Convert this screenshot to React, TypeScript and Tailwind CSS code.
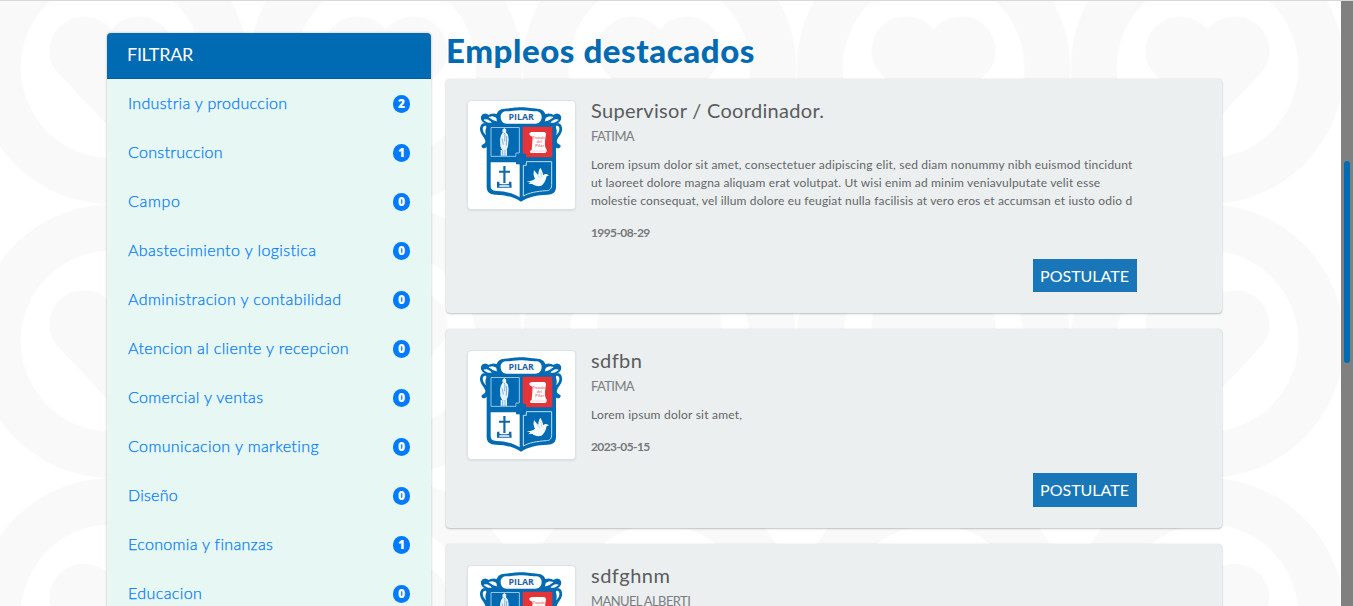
interface Category {
  name: string;
  count: number;
  tracking: string;
}

interface Job {
  title: string;
  titleTracking: string;
  place: string;
  lines: { text: string; tracking: string }[];
  date: string;
  height: string;
  button: string;
}

const categories: Category[] = [
  { name: "Industria y produccion", count: 2, tracking: "tracking-[0.32px]" },
  { name: "Construccion", count: 1, tracking: "tracking-[0.3px]" },
  { name: "Campo", count: 0, tracking: "tracking-[0.7px]" },
  { name: "Abastecimiento y logistica", count: 0, tracking: "tracking-[0.41px]" },
  { name: "Administracion y contabilidad", count: 0, tracking: "tracking-[0.42px]" },
  { name: "Atencion al cliente y recepcion", count: 0, tracking: "tracking-[0.36px]" },
  { name: "Comercial y ventas", count: 0, tracking: "tracking-[0.36px]" },
  { name: "Comunicacion y marketing", count: 0, tracking: "tracking-[0.4px]" },
  { name: "Diseño", count: 0, tracking: "tracking-[0.25px]" },
  { name: "Economia y finanzas", count: 1, tracking: "tracking-[0.33px]" },
  { name: "Educacion", count: 0, tracking: "tracking-[0.4px]" },
];

const jobs: Job[] = [
  {
    title: "Supervisor / Coordinador.",
    titleTracking: "tracking-[0.3px]",
    place: "FATIMA",
    lines: [
      {
        text: "Lorem ipsum dolor sit amet, consectetuer adipiscing elit, sed diam nonummy nibh euismod tincidunt",
        tracking: "tracking-[0.194px]",
      },
      {
        text: "ut laoreet dolore magna aliquam erat volutpat. Ut wisi enim ad minim veniavulputate velit esse",
        tracking: "tracking-[0.172px]",
      },
      {
        text: "molestie consequat, vel illum dolore eu feugiat nulla facilisis at vero eros et accumsan et iusto odio d",
        tracking: "tracking-[0.168px]",
      },
    ],
    date: "1995-08-29",
    height: "h-[234px]",
    button: "h-[33px] leading-[32px]",
  },
  {
    title: "sdfbn",
    titleTracking: "tracking-[0.4px]",
    place: "FATIMA",
    lines: [{ text: "Lorem ipsum dolor sit amet,", tracking: "tracking-[0.22px]" }],
    date: "2023-05-15",
    height: "h-[199px]",
    button: "h-[34px] leading-[32px]",
  },
  {
    title: "sdfghnm",
    titleTracking: "tracking-[0.5px]",
    place: "MANUEL ALBERTI",
    lines: [],
    date: "2023-05-15",
    height: "h-[199px]",
    button: "h-[34px] leading-[32px]",
  },
];

function HeartPattern() {
  return (
    <svg className="absolute inset-0 h-full w-full" aria-hidden="true">
      <defs>
        <pattern id="hearts" x="-25.5" y="-69.3" width="274" height="273.7" patternUnits="userSpaceOnUse">
          <circle cx="137" cy="136.8" r="113.7" fill="none" stroke="#f9f9f9" strokeWidth="46" />
          <path
            d="M137 98.800C129 89 119 85.800 108.500 85.800C90 85.800 75 101.300 75 120.300C75 129 78 136 83.500 142L137 199L190.500 142C196 136 199 129 199 120.300C199 101.300 184 85.800 165.500 85.800C155 85.800 145 89 137 98.800Z"
            fill="#f9f9f9"
          />
        </pattern>
      </defs>
      <rect width="100%" height="100%" fill="url(#hearts)" />
    </svg>
  );
}

function Ribbon() {
  return (
    <g strokeLinecap="round" strokeLinejoin="round">
      <path
        d="M120 96L84 96C70 92 63 84 65 74C68 65 78 65 86 71C96 64 108 66 118 71Z"
        fill="#006ab3"
        stroke="#006ab3"
        strokeWidth="4"
      />
      <path d="M89 76C98 72 107 76 117 86C108 88 98 84 89 76Z" fill="#fff" stroke="#fff" strokeWidth="3" />
      <path d="M73 84C79 80 86 84 94 91C85 93 78 90 73 84Z" fill="#fff" stroke="#fff" strokeWidth="2" />
      <path
        d="M76 94C66 91 60 100 60 112C61 127 72 134 76 146C77 153 73 154 66 159C62 163 67 170 74 169C85 165 87 154 84 145L84 104C84 98 81 95 76 94Z"
        fill="#006ab3"
      />
      <path d="M75 101C69 101 67 108 69 116C71 122 75 126 78 130C75 120 76 112 80 105C79 102 78 101 75 101Z" fill="#fff" />
    </g>
  );
}

function PilarShield() {
  return (
    <svg viewBox="24 27 321 324" className="h-[108px] w-[107px]" role="img">
      <Ribbon />
      <g transform="translate(366.500 0) scale(-1 1)">
        <Ribbon />
      </g>
      <path
        d="M80 93H288V284C288 301 279 307 262 308C232 309 206 314 183 329C160 314 137 309 107 308C90 307 80 301 80 284Z"
        fill="#006ab3"
      />
      <path
        d="M109 74C109 58 120 50 134 50C150 50 158 46 183 46C208 46 216 50 232 50C246 50 257 58 257 74C257 92 246 102 230 102H136C120 102 109 92 109 74Z"
        fill="#006ab3"
      />
      <path
        d="M122 75C122 64 129 58 140 58C156 58 164 55 183 55C202 55 211 58 226 58C238 58 245 64 245 75C245 88 236 95 226 95H140C130 95 122 88 122 75Z"
        fill="#fff"
      />
      <text
        x="183.500"
        y="84"
        textAnchor="middle"
        textLength="76"
        lengthAdjust="spacingAndGlyphs"
        fontFamily="Open Sans, sans-serif"
        fontWeight="700"
        fontSize="27"
        fill="#1d62a5"
      >
        PILAR
      </text>
      <path d="M93 106.500H178V183H168V193H93Z" fill="none" stroke="#9cc4e2" strokeWidth="3" />
      <path d="M188 104H277V196H198V186H188Z" fill="#e63338" />
      <path
        d="M92 211H168V217H179V316C160 303 136 298 110 297C96 296 92 291 92 282Z"
        fill="#fff"
      />
      <path
        d="M199 209H275V277C275 290 270 296 259 296C230 298 207 302 190 312V220H199Z"
        fill="none"
        stroke="#c6deef"
        strokeWidth="3"
      />
      <path d="M170 186H177V183H190V186H197V213H190V217H177V213H170Z" fill="#006ab3" />
      <path
        d="M127 113L133 108L139 113L138 121L144 128L146 142L144 163L140 174H141V191H122V174H126L121 163L120 142L123 130L128 122Z"
        fill="#e8f2f9"
      />
      <path
        d="M131 122L135 126L134 148M126 139L130 158M140 132L139 161M128 174V191M135 174V191"
        stroke="#5b9fd0"
        strokeWidth="2.200"
        fill="none"
      />
      <path
        d="M208 124C212 118 220 120 228 120H250C258 120 260 126 257 132L255 149C254 160 256 168 260 173C261 180 258 183 252 183H215C208 183 208 176 215 174L218 134C213 134 207 130 208 124Z"
        fill="#fff"
      />
      <path d="M216 177H257" stroke="#efa2a5" strokeWidth="1.500" />
      <g fontFamily="Liberation Sans, sans-serif" fontWeight="700" fontSize="10.500" fill="#ee7f83" textAnchor="middle">
        <text x="237" y="140" textLength="37" lengthAdjust="spacingAndGlyphs">
          Tratado
        </text>
        <text x="238" y="153">
          del
        </text>
        <text x="239" y="165" textLength="26" lengthAdjust="spacingAndGlyphs">
          Pilar
        </text>
      </g>
      <path d="M130 222H136.500V236H150V242H136.500V273H130V242H117V236H130Z" fill="#1267ab" />
      <path
        d="M111 269H118V275C128 277 138 277 147 275V269H154L155 287H111ZM118 280V284H148V280Z"
        fill="#1267ab"
        fillRule="evenodd"
      />
      <path
        d="M200 267C210 268 219 266 225 260C220 252 219 242 223 234C226 240 230 244 235 248C235 240 237 232 241 227C245 234 249 242 250 250C253 246 258 245 261 247L267 250L260 253C257 265 253 276 244 281C235 284 225 282 217 276L205 275L211 271Z"
        fill="#f4f9fc"
      />
      <path d="M228 243L240 259M242 240L246 256" stroke="#8fbfe0" strokeWidth="1.500" fill="none" />
    </svg>
  );
}

function Sidebar() {
  return (
    <aside className="flex h-[640px] w-[324px] flex-col rounded bg-[#e7f7f4] shadow-[0_0_2px_1px_rgba(0,0,0,0.12)]">
      <h2 className="h-[46px] rounded-t border-b border-[#005c9c] bg-[#006ab3] pl-[20px] text-[18px] leading-[43px] tracking-[-0.3px] text-white">
        FILTRAR
      </h2>
      <ul>
        {categories.map((c) => (
          <li key={c.name} className="flex h-[49px] items-center justify-between pr-[21px] pl-[21px]">
            <a
              className={`mb-px text-[16px] leading-[24px] font-light whitespace-nowrap text-[#007bff] [-webkit-text-stroke:0.25px_#007bff] ${c.tracking}`}
            >
              {c.name}
            </a>
            <span className="mt-px h-[18px] w-[17px] rounded-full bg-[#007bff] text-center font-['Open_Sans'] text-[12px] leading-[17px] font-extrabold text-white">
              {c.count}
            </span>
          </li>
        ))}
      </ul>
    </aside>
  );
}

function JobCard({ job }: { job: Job }) {
  return (
    <article
      className={`flex shrink-0 rounded bg-[#ebefef] pt-[21px] pl-[21.5px] shadow-[0_1px_2px_0_rgba(0,0,0,0.22),0_0_2px_0_rgba(0,0,0,0.1)] ${job.height}`}
    >
      <div className="flex h-[110px] w-[109px] shrink-0 items-center justify-center rounded border border-[#dee2e6] bg-white shadow-[0_1px_2px_rgba(0,0,0,0.08)]">
        <PilarShield />
      </div>
      <div className="ml-[15px] flex w-[545.5px] flex-col">
        <h3 className={`-mt-[2px] text-[20px] leading-[24px] text-[#5a5c5e] ${job.titleTracking}`}>{job.title}</h3>
        <p className="mt-[5px] text-[13px] leading-[18px] tracking-[-0.600px] text-[#7b7d7f]">{job.place}</p>
        <div className="mt-[11px] text-[12px] leading-[18px] text-[#636669]">
          {job.lines.map((l) => (
            <p key={l.text} className={`whitespace-nowrap ${l.tracking}`}>
              {l.text}
            </p>
          ))}
        </div>
        <p className="mt-[14px] text-[12px] leading-[18px] font-bold tracking-[-0.600px] text-[#77797b]">{job.date}</p>
        <button className={`mt-[17px] w-[104px] shrink-0 self-end bg-[#1976b9] text-[16px] text-white ${job.button}`}>
          POSTULATE
        </button>
      </div>
    </article>
  );
}

export default function App() {
  return (
    <div className="relative flex h-[606px] w-[1353px] overflow-hidden bg-white font-['Lato',sans-serif]">
      <HeartPattern />
      <div className="relative flex h-full w-[1341px] items-start gap-[14.5px] border-t border-[#d9d9d9] pt-[32px] pl-[107px]">
        <Sidebar />
        <main className="flex w-[776px] flex-col">
          <h1 className="-mt-[2px] mb-[8px] h-[40px] pl-[0.5px] text-[33px] leading-[38px] font-black tracking-[0.570px] text-[#006ab3]">
            Empleos destacados
          </h1>
          <div className="flex flex-col gap-[16px]">
            {jobs.map((job) => (
              <JobCard key={job.title} job={job} />
            ))}
          </div>
        </main>
      </div>
      <div className="relative h-full w-[12px] border-t border-[#d9d9d9] bg-[#808080] pt-[160px] pl-[3px]">
        <div className="h-[202px] w-[6px] rounded-full bg-[#006ab3]" />
      </div>
    </div>
  );
}
